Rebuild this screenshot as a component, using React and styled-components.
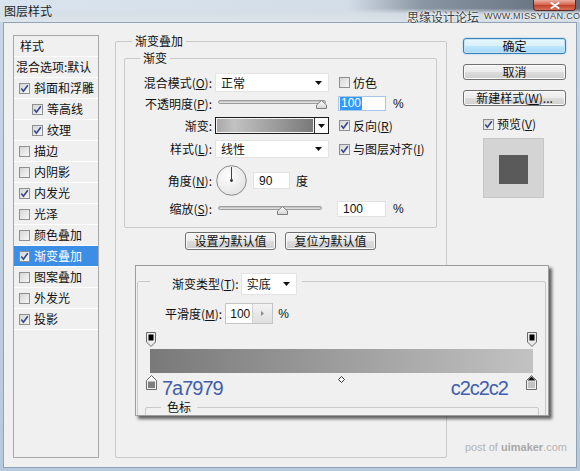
import React from 'react';
import styled, { createGlobalStyle } from 'styled-components';

const CJK = `"Noto Sans CJK SC", "Microsoft YaHei", sans-serif`;
const LATIN = `"Liberation Sans", Arial, sans-serif`;

const GlobalStyle = createGlobalStyle`
  html, body { margin: 0; padding: 0; background: #fff; }
  body { font-family: ${CJK}; font-size: 12px; line-height: 14px; color: #111; }
  *, *::before, *::after { box-sizing: border-box; }
`;

const Window = styled.div`
  position: relative;
  width: 580px;
  height: 471px;
  overflow: hidden;
  display: flex;
  flex-direction: column;
  background: linear-gradient(180deg, #c8d6e5 0%, #b8c9db 100%);
`;

const TitleBar = styled.div`
  height: 22px;
  flex: none;
  display: flex;
  align-items: center;
  padding-left: 4px;
  background:
    linear-gradient(180deg, rgba(214, 222, 230, 0) 0%, rgba(214, 222, 230, 0) 38%, rgba(214, 222, 230, 0.92) 62%, rgba(222, 229, 236, 0.95) 100%),
    linear-gradient(90deg, #dae4ee 0%, #d3dde8 60%, #8995a2 73%, #5f6b78 100%);
`;

const Title = styled.span`
  font-size: 12px;
  color: #1e1e1e;
`;

const CloseButton = styled.div`
  margin-left: auto;
  margin-right: 4px;
  align-self: flex-start;
  width: 43px;
  height: 11px;
  border: 1px solid #5a2a22;
  border-top: none;
  border-radius: 0 0 4px 4px;
  background: linear-gradient(180deg, #eab0a2 0%, #d66a55 45%, #c2442c 55%, #d9705a 100%);
  display: flex;
  align-items: center;
  justify-content: center;
`;

const TitleMark = styled.div`
  position: absolute;
  z-index: 2;
  left: 407px;
  top: 11px;
  display: flex;
  align-items: center;
  gap: 5px;
  white-space: nowrap;
  color: #3a3f45;
  text-shadow: 0 0 2px #fff, 0 0 3px #fff;
  font-size: 12px;
  line-height: 11px;
`;

const TitleMarkLatin = styled.span`
  font-family: ${LATIN};
  font-size: 9px;
  letter-spacing: 0.4px;
`;

const Body = styled.div`
  flex: 1;
  margin: 0 3px 3px 3px;
  background: #f0f0f0;
  border: 1px solid #8ea2b8;
  display: flex;
  align-items: flex-start;
  gap: 16px;
  padding: 12px 0 0 9px;
`;

/* ---------- left list ---------- */
const StyleList = styled.div`
  width: 86px;
  height: 423px;
  flex: none;
  border: 1px solid #a8a8a8;
  background: #f0f0f0;
`;

const ListRow = styled.div`
  height: 21px;
  border-bottom: 1px solid #fff;
  display: flex;
  align-items: center;
  gap: 4px;
  padding-left: ${p => p.$pl}px;
  background: ${p => (p.$selected ? '#3b8de6' : 'transparent')};
  color: ${p => (p.$selected ? '#fff' : '#111')};
  white-space: nowrap;
  overflow: hidden;
`;

const Box = styled.span`
  width: 11px;
  height: 11px;
  flex: none;
  border: 1px solid #8e8f8f;
  background: linear-gradient(135deg, #d6d6d6 0%, #f7f7f7 100%);
  display: inline-flex;
  align-items: center;
  justify-content: center;
`;

const Check = ({ on }) => (
  <Box>
    {on && (
      <svg width="9" height="9" viewBox="0 0 9 9">
        <path d="M1.3 4.6 L3.4 7.2 L7.8 1.2" fill="none" stroke="#33478a" strokeWidth="1.6" />
      </svg>
    )}
  </Box>
);

/* ---------- fieldsets ---------- */
const Group = styled.fieldset`
  margin: ${p => p.$m || '0'};
  min-width: 0;
  border: 1px solid #c9c9c9;
  border-radius: 2px;
  padding: ${p => p.$p || '0'};
  width: ${p => (p.$w ? `${p.$w}px` : 'auto')};
  height: ${p => (p.$h ? `${p.$h}px` : 'auto')};
  flex: none;
`;

const Legend = styled.legend`
  margin-left: ${p => p.$ml}px;
  padding: ${p => p.$p || '0 3px'};
  line-height: 14px;
  font-size: 12px;
  color: #111;
`;

const FormRow = styled.div`
  display: flex;
  align-items: center;
  height: ${p => p.$h}px;
  margin-top: ${p => p.$mt}px;
`;

const Label = styled.div`
  width: 87px;
  margin-right: 3px;
  text-align: right;
  white-space: nowrap;
  flex: none;
`;

const Select = styled.div`
  width: ${p => p.$w}px;
  height: ${p => p.$h}px;
  flex: none;
  background: #fff;
  border: 1px solid #e4e4e4;
  display: flex;
  align-items: center;
  justify-content: space-between;
  padding: 0 6px 0 5px;
`;

const DownArrow = () => (
  <svg width="7" height="4" viewBox="0 0 7 4">
    <path d="M0 0 H7 L3.5 4 Z" fill="#111" />
  </svg>
);

const CheckItem = styled.div`
  display: flex;
  align-items: center;
  gap: 3px;
  margin-left: ${p => p.$ml}px;
  white-space: nowrap;
`;

const SliderBox = styled.div`
  position: relative;
  width: ${p => p.$w}px;
  height: 15px;
  flex: none;
`;

const Track = styled.div`
  margin: 4px 0 0 3px;
  width: ${p => p.$w}px;
  height: 4px;
  border: 1px solid #9c9c9c;
  border-radius: 2px;
  background: linear-gradient(180deg, #bdbdbd, #e9e9e9);
`;

const Thumb = styled.svg`
  position: absolute;
  top: 4px;
`;

const Slider = ({ w, track, pos }) => (
  <SliderBox $w={w}>
    <Track $w={track} />
    <Thumb width="11" height="9" viewBox="0 0 11 9" style={{ left: pos - 5 }}>
      <defs>
        <linearGradient id="tg" x1="0" y1="0" x2="0" y2="1">
          <stop offset="0" stopColor="#ffffff" />
          <stop offset="1" stopColor="#d4d4d4" />
        </linearGradient>
      </defs>
      <path d="M5.5 0.5 L10.5 5 V8.5 H0.5 V5 Z" fill="url(#tg)" stroke="#7d7d7d" />
    </Thumb>
  </SliderBox>
);

const NumInput = styled.div`
  width: ${p => p.$w}px;
  height: ${p => p.$h}px;
  margin-left: ${p => p.$ml}px;
  flex: none;
  background: #fff;
  border: 1px solid ${p => (p.$focus ? '#a9c8e8' : '#e2e2e2')};
  display: flex;
  align-items: center;
  padding-left: ${p => p.$pl ?? 4}px;
  font-family: ${LATIN};
  font-size: 12px;
  color: #111;
`;

const Selected = styled.span`
  background: #3399ff;
  color: #fff;
  padding: 0 1px;
  line-height: 13px;
`;

const Unit = styled.span`
  margin-left: ${p => p.$ml}px;
  font-family: ${p => (p.$cjk ? CJK : LATIN)};
  font-size: 12px;
`;

const Swatch = styled.div`
  width: 114px;
  height: 17px;
  flex: none;
  border: 1px solid #1c1c1c;
  display: flex;
  background: #fff;
`;

const SwatchFill = styled.div`
  flex: 1;
  border: 1px solid #f4f4f4;
  background: linear-gradient(90deg, #a9a9a9 0%, #c2c2c2 18%, #7a7979 100%);
`;

const SwatchArrow = styled.div`
  width: 14px;
  border-left: 1px solid #333;
  display: flex;
  align-items: center;
  justify-content: center;
  background: #fbfbfb;
`;

const DialWrap = styled.div`
  margin-left: 1px;
  width: 31px;
  height: 31px;
  flex: none;
`;

const Dial = () => (
  <DialWrap>
    <svg width="31" height="31" viewBox="0 0 31 31">
      <defs>
        <radialGradient id="dg" cx="0.4" cy="0.35" r="0.7">
          <stop offset="0" stopColor="#ffffff" />
          <stop offset="1" stopColor="#e2e2e2" />
        </radialGradient>
      </defs>
      <circle cx="15.5" cy="15.5" r="14.8" fill="url(#dg)" stroke="#8a8a8a" />
      <line x1="15.5" y1="15.5" x2="15.5" y2="2" stroke="#444" strokeWidth="1" />
      <circle cx="15.5" cy="15.5" r="1.4" fill="#333" />
    </svg>
  </DialWrap>
);

const ButtonRow = styled.div`
  display: flex;
  justify-content: center;
  gap: 9px;
  margin-top: 4px;
`;

const Button = styled.div`
  width: ${p => p.$w}px;
  height: ${p => p.$h}px;
  flex: none;
  border: 1px solid ${p => (p.$primary ? '#3c7fb1' : '#707070')};
  border-radius: 3px;
  background: ${p =>
    p.$primary
      ? 'linear-gradient(180deg, #eaf6fd 0%, #d9f0fc 50%, #bee6fd 51%, #a7d9f5 100%)'
      : 'linear-gradient(180deg, #f4f4f4 0%, #ebebeb 50%, #dddddd 51%, #cfcfcf 100%)'};
  box-shadow: ${p => (p.$primary ? '0 0 2px #7ec4ef, inset 0 0 0 1px #bfe4f9' : 'inset 0 0 0 1px #fbfbfb')};
  display: flex;
  align-items: center;
  justify-content: center;
  font-size: 12px;
  color: #111;
  white-space: nowrap;
`;

/* ---------- right column ---------- */
const RightCol = styled.div`
  width: 103px;
  flex: none;
  margin-top: 3px;
  display: flex;
  flex-direction: column;
  gap: 10px;
`;

const PreviewRow = styled.div`
  display: flex;
  align-items: center;
  gap: 3px;
  margin: 1px 0 0 20px;
`;

const PreviewBox = styled.div`
  width: 61px;
  height: 60px;
  margin: -3px 0 0 20px;
  background: #d4d4d4;
  border: 1px solid #c6c6c6;
  display: flex;
  align-items: center;
  justify-content: center;
`;

const PreviewSquare = styled.div`
  width: 29px;
  height: 29px;
  margin-top: 2px;
  background: #5a5a5a;
`;

/* ---------- overlay gradient editor ---------- */
const EditorPanel = styled.div`
  position: absolute;
  left: 135px;
  top: 265px;
  width: 414px;
  height: 151px;
  background: #f0f0f0;
  border: 1px solid #9d9d9d;
  box-shadow: 3px 3px 3px rgba(0, 0, 0, 0.6);
  overflow: hidden;
`;

const InlineLegendContent = styled.span`
  display: inline-flex;
  align-items: center;
  gap: 2px;
`;

const SmoothRow = styled.div`
  display: flex;
  align-items: center;
  height: 21px;
  margin-top: 8px;
  padding-left: 19px;
`;

const SmoothInput = styled.div`
  margin-left: 3px;
  width: 48px;
  height: 21px;
  border: 1px solid #c4c4c4;
  background: #fff;
  display: flex;
  font-family: ${LATIN};
  font-size: 12px;
`;

const SmoothValue = styled.span`
  flex: 1;
  display: flex;
  align-items: center;
  padding-left: 4px;
`;

const Stepper = styled.span`
  width: 20px;
  border-left: 1px solid #d0d0d0;
  background: linear-gradient(180deg, #f3f3f3, #dedede);
  display: flex;
  align-items: center;
  justify-content: center;
`;

const GradientEditor = styled.div`
  width: 391px;
  margin-top: 8px;
`;

const StopRow = styled.div`
  display: flex;
  justify-content: space-between;
  height: 15px;
`;

const Bar = styled.div`
  margin: 2px 4px 0 4px;
  height: 24px;
  background: linear-gradient(90deg, #7a7979 0%, #c2c2c2 100%);
`;

const BottomRow = styled.div`
  display: grid;
  grid-template-columns: 1fr auto 1fr;
  align-items: start;
  margin-top: 2px;
  height: 23px;
`;

const StopGroup = styled.div`
  display: flex;
  align-items: flex-start;
  justify-content: ${p => (p.$end ? 'flex-end' : 'flex-start')};
`;

const HexText = styled.span`
  margin: 3px ${p => p.$mr || 0}px 0 ${p => p.$ml || 0}px;
  font-family: ${LATIN};
  font-size: 20px;
  line-height: 20px;
  letter-spacing: -1px;
  color: #3f5fae;
`;

const Diamond = styled.svg`
  margin-top: 1px;
`;

const TopStop = () => (
  <svg width="10" height="15" viewBox="0 0 10 15">
    <path d="M0.5 0.5 H9.5 V10 L5 14.5 L0.5 10 Z" fill="#ececec" stroke="#6a6a6a" />
    <rect x="2.5" y="2.5" width="5" height="6" fill="#000" />
  </svg>
);

const BottomStop = ({ top, body }) => (
  <svg width="11" height="15" viewBox="0 0 11 15">
    <path d="M5.5 0.5 L10.5 5.5 V14.5 H0.5 V5.5 Z" fill="#f2f2f2" stroke="#6a6a6a" />
    <path d="M5.5 1.5 L9.5 5.5 H1.5 Z" fill={top} />
    <rect x="2" y="6.5" width="7" height="6.5" fill={body} />
  </svg>
);

const Watermark = styled.div`
  position: absolute;
  right: 13px;
  top: 440px;
  font-family: ${LATIN};
  font-size: 11px;
  color: #b4b4b4;
`;

const WatermarkBold = styled.b`
  color: #a9a9a9;
`;

const listItems = [
  { text: '样式', pl: 6 },
  { text: '混合选项:默认', pl: 2 },
  { text: '斜面和浮雕', pl: 5, box: true, on: true },
  { text: '等高线', pl: 18, box: true, on: true },
  { text: '纹理', pl: 18, box: true, on: true },
  { text: '描边', pl: 5, box: true },
  { text: '内阴影', pl: 5, box: true },
  { text: '内发光', pl: 5, box: true, on: true },
  { text: '光泽', pl: 5, box: true },
  { text: '颜色叠加', pl: 5, box: true },
  { text: '渐变叠加', pl: 5, box: true, on: true, selected: true },
  { text: '图案叠加', pl: 5, box: true },
  { text: '外发光', pl: 5, box: true },
  { text: '投影', pl: 5, box: true, on: true },
];

export default function App() {
  return (
    <>
      <GlobalStyle />
      <Window>
        <TitleBar>
          <Title>图层样式</Title>
          <CloseButton>
            <svg width="10" height="7" viewBox="0 0 10 7">
              <path d="M1.5 1 L8.5 6 M8.5 1 L1.5 6" stroke="#fff" strokeWidth="2" strokeLinecap="round" />
            </svg>
          </CloseButton>
        </TitleBar>
        <TitleMark>
          <span>思缘设计论坛</span>
          <TitleMarkLatin>WWW.MISSYUAN.COM</TitleMarkLatin>
        </TitleMark>

        <Body>
          <StyleList>
            {listItems.map(it => (
              <ListRow key={it.text} $pl={it.pl} $selected={it.selected}>
                {it.box && <Check on={it.on} />}
                <span>{it.text}</span>
              </ListRow>
            ))}
          </StyleList>

          <Group $m="-1px 0 0 0" $p="0 9px 0 8px" $w={332} $h={424}>
            <Legend $ml={8}>渐变叠加</Legend>
            <Group $m="3px 0 0 0" $p="0 0 10px 0">
              <Legend $ml={15}>渐变</Legend>

              <FormRow $h={19} $mt={8}>
                <Label>混合模式(<u>O</u>):</Label>
                <Select $w={114} $h={19}>
                  <span>正常</span>
                  <DownArrow />
                </Select>
                <CheckItem $ml={10}>
                  <Check />
                  <span>仿色</span>
                </CheckItem>
              </FormRow>

              <FormRow $h={15} $mt={4}>
                <Label>不透明度(<u>P</u>):</Label>
                <Slider w={114} track={108} pos={106} />
                <NumInput $w={48} $h={15} $ml={9} $pl={1} $focus>
                  <Selected>100</Selected>
                </NumInput>
                <Unit $ml={7}>%</Unit>
              </FormRow>

              <FormRow $h={17} $mt={6}>
                <Label>渐变:</Label>
                <Swatch>
                  <SwatchFill />
                  <SwatchArrow>
                    <DownArrow />
                  </SwatchArrow>
                </Swatch>
                <CheckItem $ml={10}>
                  <Check on />
                  <span>反向(<u>R</u>)</span>
                </CheckItem>
              </FormRow>

              <FormRow $h={18} $mt={6}>
                <Label>样式(<u>L</u>):</Label>
                <Select $w={114} $h={18}>
                  <span>线性</span>
                  <DownArrow />
                </Select>
                <CheckItem $ml={10}>
                  <Check on />
                  <span>与图层对齐(<u>I</u>)</span>
                </CheckItem>
              </FormRow>

              <FormRow $h={31} $mt={7}>
                <Label>角度(<u>N</u>):</Label>
                <Dial />
                <NumInput $w={37} $h={17} $ml={6} $pl={5}>90</NumInput>
                <Unit $ml={6} $cjk>度</Unit>
              </FormRow>

              <FormRow $h={16} $mt={5}>
                <Label>缩放(<u>S</u>):</Label>
                <Slider w={114} track={104} pos={67} />
                <NumInput $w={49} $h={16} $ml={8} $pl={5}>100</NumInput>
                <Unit $ml={7}>%</Unit>
              </FormRow>
            </Group>

            <ButtonRow>
              <Button $w={91} $h={18}>设置为默认值</Button>
              <Button $w={91} $h={18}>复位为默认值</Button>
            </ButtonRow>
          </Group>

          <RightCol>
            <Button $w={103} $h={16} $primary>确定</Button>
            <Button $w={103} $h={16}>取消</Button>
            <Button $w={103} $h={16}>新建样式(<u>W</u>)...</Button>
            <PreviewRow>
              <Check on />
              <span>预览(<u>V</u>)</span>
            </PreviewRow>
            <PreviewBox>
              <PreviewSquare />
            </PreviewBox>
          </RightCol>
        </Body>

        <EditorPanel>
          <Group $m="1px 0 0 1px" $p="0 0 0 8px" $w={409} $h={220}>
            <Legend $ml={4} $p="6px 5px 0 22px">
              <InlineLegendContent>
                <span>渐变类型(<u>T</u>):</span>
                <Select $w={56} $h={22}>
                  <span>实底</span>
                  <DownArrow />
                </Select>
              </InlineLegendContent>
            </Legend>

            <SmoothRow>
              <span>平滑度(<u>M</u>):</span>
              <SmoothInput>
                <SmoothValue>100</SmoothValue>
                <Stepper>
                  <svg width="3" height="5" viewBox="0 0 3 5">
                    <path d="M0 0 L3 2.5 L0 5 Z" fill="#8a8a8a" />
                  </svg>
                </Stepper>
              </SmoothInput>
              <Unit $ml={5}>%</Unit>
            </SmoothRow>

            <GradientEditor>
              <StopRow>
                <TopStop />
                <TopStop />
              </StopRow>
              <Bar />
              <BottomRow>
                <StopGroup>
                  <BottomStop top="#fafafa" body="#7f7f7f" />
                  <HexText $ml={5}>7a7979</HexText>
                </StopGroup>
                <Diamond width="7" height="7" viewBox="0 0 7 7">
                  <path d="M3.5 0.5 L6.5 3.5 L3.5 6.5 L0.5 3.5 Z" fill="#fff" stroke="#333" />
                </Diamond>
                <StopGroup $end>
                  <HexText $mr={18}>c2c2c2</HexText>
                  <BottomStop top="#111" body="#c2c2c2" />
                </StopGroup>
              </BottomRow>
            </GradientEditor>

            <Group $m="2px 0 0 -1px" $p="0" $w={394} $h={40}>
              <Legend $ml={15} $p="0 6px">色标</Legend>
            </Group>
          </Group>
        </EditorPanel>

        <Watermark>
          post of <WatermarkBold>uimaker</WatermarkBold>.com
        </Watermark>
      </Window>
    </>
  );
}
